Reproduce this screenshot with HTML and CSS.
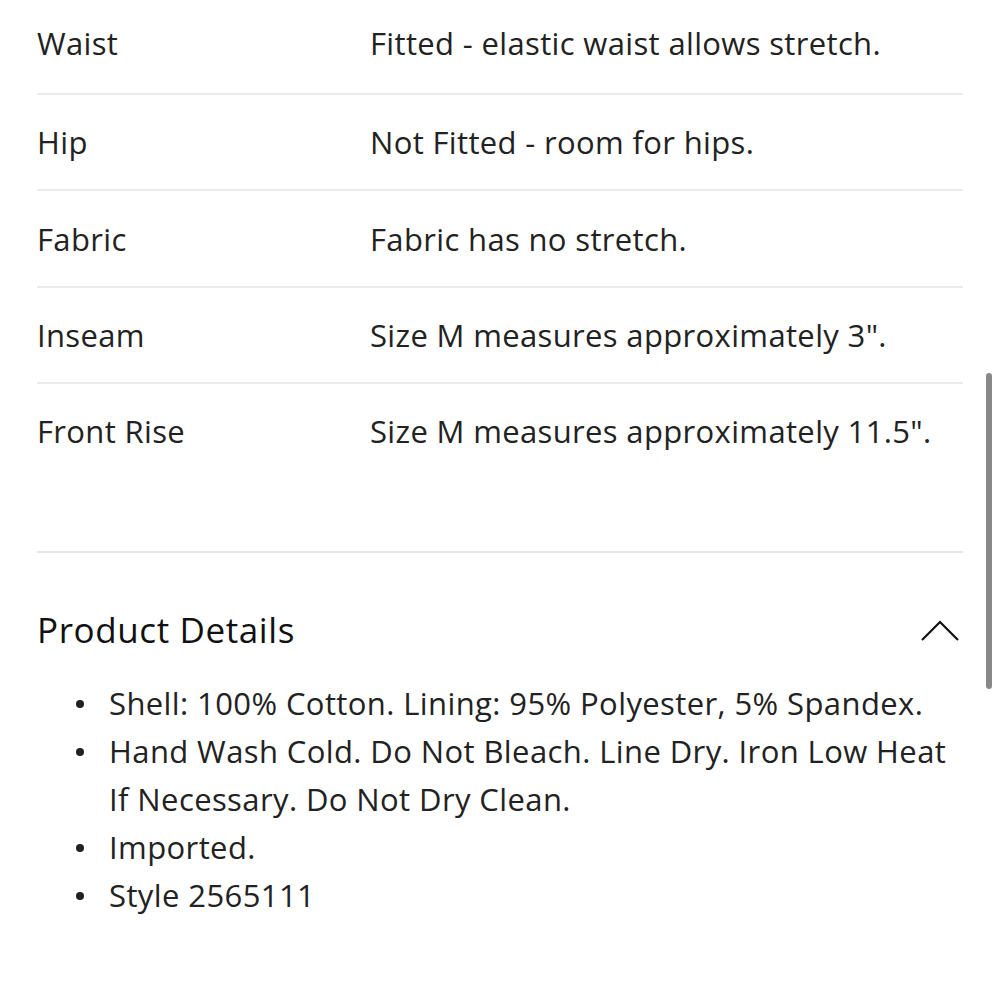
FILE: index.html
```html
<!DOCTYPE html>
<html>
<head>
<meta charset="utf-8">
<link rel="stylesheet" href="styles.css">
</head>
<body>
<div class="page">
  <div class="fit-table">
    <div class="fit-row first"><div class="label">Waist</div><div class="value">Fitted - elastic waist allows stretch.</div></div>
    <div class="fit-row"><div class="label">Hip</div><div class="value">Not Fitted - room for hips.</div></div>
    <div class="fit-row"><div class="label">Fabric</div><div class="value">Fabric has no stretch.</div></div>
    <div class="fit-row"><div class="label">Inseam</div><div class="value">Size M measures approximately 3".</div></div>
    <div class="fit-row"><div class="label">Front Rise</div><div class="value">Size M measures approximately 11.5".</div></div>
  </div>
  <div class="section">
    <div class="section-head">
      <h2 class="section-title">Product Details</h2>
      <svg class="chevron" width="40" height="24" viewBox="0 0 40 24"><path d="M2 22 L20 4 L38 22" fill="none" stroke="#111" stroke-width="2.2"/></svg>
    </div>
    <ul class="details">
      <li>Shell: 100% Cotton. Lining: 95% Polyester, 5% Spandex.</li>
      <li>Hand Wash Cold. Do Not Bleach. Line Dry. Iron Low Heat If Necessary. Do Not Dry Clean.</li>
      <li>Imported.</li>
      <li>Style 2565111</li>
    </ul>
  </div>
</div>
<div class="scrollbar"></div>
</body>
</html>
```
FILE: styles.css
```css
html, body { margin: 0; padding: 0; background: #fff; }
body { font-family: "Open Sans", "Noto Sans", sans-serif; color: #222; overflow: hidden; height: 1000px; }
.page { padding: 0 37px; }
.fit-table { margin-top: -8px; }
.fit-row { display: flex; align-items: center; height: 94.4px; border-top: 2px solid #ebebeb; font-size: 31px; letter-spacing: 0.35px; }
.fit-row.first { border-top: none; height: 101px; }
.label { width: 333px; }
.value { flex: 1; }
.section { margin-top: 72px; border-top: 2px solid #e6e6e6; }
.section-head { display: flex; justify-content: space-between; align-items: center; height: 154px; }
.section-title { margin: 0; font-weight: 400; font-size: 35px; letter-spacing: 0.6px; color: #111; }
.chevron { margin-right: 3px; }
.details { list-style: none; margin: -28px 0 0; padding-left: 72px; font-size: 31px; line-height: 48px; letter-spacing: 0.4px; color: #222; }
.details li { position: relative; }
.details li::before { content: ""; position: absolute; left: -33px; top: 21px; width: 8px; height: 8px; border-radius: 50%; background: #222; }
.scrollbar { position: absolute; left: 986px; top: 373px; width: 6px; height: 316px; border-radius: 3px; background: #888; }
```
